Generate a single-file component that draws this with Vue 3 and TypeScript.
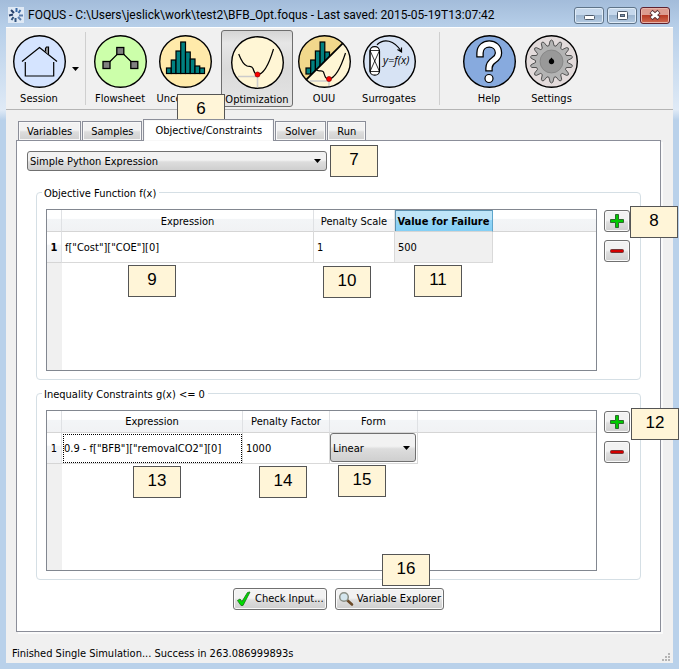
<script setup lang="ts">
import { ref } from 'vue'

interface Note { n: number; x: number; y: number }

const notes: Note[] = [
  { n: 6, x: 177, y: 94 },
  { n: 7, x: 330, y: 145 },
  { n: 8, x: 630, y: 206 },
  { n: 9, x: 128, y: 265 },
  { n: 10, x: 323, y: 266 },
  { n: 11, x: 414, y: 265 },
  { n: 12, x: 631, y: 408 },
  { n: 13, x: 133, y: 466 },
  { n: 14, x: 259, y: 466 },
  { n: 15, x: 338, y: 465 },
  { n: 16, x: 382, y: 554 },
]

const tabs = ['Variables', 'Samples', 'Objective/Constraints', 'Solver', 'Run']
const activeTab = ref('Objective/Constraints')
const solverType = ref('Simple Python Expression')
const form = ref('Linear')

const barTops = [33, 25, 16, 7, 17, 24, 31, 33]

function gearPath(teeth: number, outer: number, inner: number): string {
  const pts: string[] = []
  const step = (Math.PI * 2) / teeth
  const at = (r: number, a: number) => `${(26.5 + r * Math.sin(a)).toFixed(2)} ${(26.5 - r * Math.cos(a)).toFixed(2)}`
  for (let i = 0; i < teeth; i++) {
    const a = i * step
    pts.push(at(inner, a - step * 0.36), at(outer - 1, a - step * 0.16), at(outer, a), at(outer - 1, a + step * 0.16), at(inner, a + step * 0.36))
  }
  return `M${pts.join('L')}Z`
}
const gear = gearPath(14, 21.5, 16)
</script>

<template>
  <div class="window">
    <header class="titlebar">
      <svg class="app-icon" viewBox="0 0 16 16" aria-hidden="true">
        <rect width="16" height="16" fill="#dfe9f5" />
        <g stroke-width="2" fill="none">
          <path d="M8.500 1v4M12.500 3l-2 3" stroke="#3b6aa5" />
          <path d="M15 8.500h-4M13 13l-3-3" stroke="#5d7fae" />
          <path d="M7.500 15v-4M3.500 13l2-3" stroke="#33557f" />
          <path d="M1 8.500l4-1M3 3l3 3" stroke="#27406b" />
        </g>
      </svg>
      <h1>FOQUS - C:\Users\jeslick\work\test2\BFB_Opt.foqus - Last saved: 2015-05-19T13:07:42</h1>
      <div class="win-buttons">
        <button type="button" aria-label="Minimize"><svg viewBox="0 0 28 14"><rect x="9.500" y="7.500" width="10" height="4" rx="1" fill="#fff" stroke="#4d5a6b" /></svg></button>
        <button type="button" aria-label="Maximize"><svg viewBox="0 0 28 14"><rect x="9.500" y="3.500" width="10" height="8" rx="1" fill="#fff" stroke="#4d5a6b" /><rect x="12.500" y="6.500" width="4" height="2" fill="#7d93ae" stroke="#4d5a6b" /></svg></button>
        <button type="button" class="close" aria-label="Close"><svg viewBox="0 0 28 14"><path d="M10 3.500l8 7M18 3.500l-8 7" stroke="#5a3236" stroke-width="4.500" /><path d="M10.500 4l7 6M17.500 4l-7 6" stroke="#fff" stroke-width="2.800" /></svg></button>
      </div>
    </header>

    <div class="client">
      <nav class="toolbar" aria-label="Main">
        <button type="button" class="tool session">
          <svg viewBox="0 0 53 53"><circle cx="26.500" cy="26.500" r="25.800" fill="#d5e4ff" stroke="#000" stroke-width="1.400" /><g fill="none" stroke="#000" stroke-width="1.200"><path d="M9 26.500L26.500 12.500L44 26.500M12.300 27v14h28.400V27" /><path d="M32.500 16.500v-3l1-1.500h2v7.500" fill="#999" /></g></svg>
          <span>Session</span>
        </button>
        <button type="button" class="menu-arrow" aria-label="Session menu"><svg viewBox="0 0 7 4"><path d="M0 0h7L3.500 4z" /></svg></button>
        <i class="sep"></i>
        <button type="button" class="tool flowsheet">
          <svg viewBox="0 0 53 53"><circle cx="26.500" cy="26.500" r="25.800" fill="#ccffaa" stroke="#000" stroke-width="1.400" /><path d="M12.500 30L26.500 16L40.500 30" fill="none" stroke="#000" stroke-width="1.200" /><g fill="#808080" stroke="#000" stroke-width="1.300"><rect x="9" y="26.500" width="7" height="7" /><rect x="22.800" y="12.500" width="7" height="7" /><rect x="36.800" y="26.500" width="7" height="7" /></g></svg>
          <span>Flowsheet</span>
        </button>
        <button type="button" class="tool uncertainty">
          <svg viewBox="0 0 53 53"><circle cx="26.500" cy="26.500" r="25.800" fill="#ffeaaa" stroke="#000" stroke-width="1.400" /><g fill="#008080" stroke="#000" stroke-width="1.200"><rect v-for="(t, i) in barTops" :key="i" :x="7.5 + i * 4.75" :y="t" width="4.750" :height="38.5 - t" /></g></svg>
          <span>Uncertainty</span>
        </button>
        <button type="button" class="tool optimization pressed" aria-pressed="true">
          <svg viewBox="0 0 53 53"><circle cx="26.500" cy="26.500" r="25.800" fill="#fff6d5" stroke="#000" stroke-width="1.400" /><path d="M7 40.500h19.500v11" fill="none" stroke="#ccc" stroke-width="1.600" /><path d="M7.700 18C10 24 13 29 16 30C19 31 20.500 29 22 32.500C23 36 24 38.500 26.500 38.500C33 38.500 38 28 42.500 13" fill="none" stroke="#000" stroke-width="1.200" /><circle cx="26.500" cy="38.500" r="2.500" fill="#f00" stroke="#800" stroke-width=".7" /></svg>
          <span>Optimization</span>
        </button>
        <button type="button" class="tool ouu">
          <svg viewBox="0 0 53 53">
            <defs><clipPath id="half"><path d="M0 0H53L0 53Z" /></clipPath></defs>
            <circle cx="26.500" cy="26.500" r="25.800" fill="#fff6d5" /><circle cx="26.500" cy="26.500" r="25.800" fill="#f2d88c" clip-path="url(#half)" />
            <g fill="#008080" stroke="#000" stroke-width="1.200" clip-path="url(#half)"><rect v-for="(t, i) in barTops.slice(0, 5)" :key="i" :x="8 + i * 4.7" :y="t" width="4.700" :height="39 - t" /></g>
            <path d="M12 46h19v6" fill="none" stroke="#ccc" stroke-width="1.500" />
            <path d="M8.300 44.700L44.700 8.300" stroke="#000" stroke-width="1.800" />
            <path d="M18 34C20 38 24 34 25.500 37C27 41 27 44 31 44C38 43 43 32 47.500 18" fill="none" stroke="#000" stroke-width="1.200" />
            <circle cx="31" cy="44" r="2.500" fill="#f00" stroke="#800" stroke-width=".7" /><circle cx="26.500" cy="26.500" r="25.800" fill="none" stroke="#000" stroke-width="1.400" />
          </svg>
          <span>OUU</span>
        </button>
        <button type="button" class="tool surrogates">
          <svg viewBox="0 0 53 53"><circle cx="26.500" cy="26.500" r="25.800" fill="#d7e3f4" stroke="#000" stroke-width="1.400" /><g fill="none" stroke="#000"><rect x="7" y="11.700" width="9.500" height="28.500" rx="4.500" fill="#fff" stroke-width="1.200" /><path d="M7 15.500h9.500v21H7zM7 15.500l9.500 21M16.500 15.500l-9.500 21" stroke-width=".8" /><path d="M14 9.700C21 3 31 5 38 16M34.500 14.500L38.500 17V12.500" stroke-width="1.200" /></g><text x="20" y="29" class="formula">y=f(x)</text></svg>
          <span>Surrogates</span>
        </button>
        <i class="sep second"></i>
        <button type="button" class="tool help">
          <svg viewBox="0 0 53 53"><circle cx="26.500" cy="26.500" r="25.800" fill="#87aade" stroke="#000" stroke-width="1.400" /><g fill="none"><path d="M17 22.500V18C17 6 35.500 6 35.500 18C35.500 26 26 24 26 33V36.500" stroke="#000" stroke-width="7.500" /><path d="M17 21.300V18C17 6 35.500 6 35.500 18C35.500 26 26 24 26 33V35.300" stroke="#fff" stroke-width="5" /></g><circle cx="26" cy="43.500" r="4" fill="#fff" stroke="#000" stroke-width="1.200" /></svg>
          <span>Help</span>
        </button>
        <button type="button" class="tool settings">
          <svg viewBox="0 0 53 53"><circle cx="26.500" cy="26.500" r="25.800" fill="#e3dbdb" stroke="#000" stroke-width="1.400" /><path :d="gear" fill="#b3b3b3" stroke="#444" stroke-width=".9" stroke-linejoin="round" /><circle cx="26.500" cy="26.500" r="11.500" fill="#999" stroke="#777" stroke-width=".6" /><path d="M26.500 22.500l1.200 1.600a2.700 2.700 0 1 1-2.400 0z" /></svg>
          <span>Settings</span>
        </button>
      </nav>

      <main>
        <div class="tabs" role="tablist">
          <button v-for="t in tabs" :key="t" type="button" role="tab" :aria-selected="t === activeTab" :class="{ active: t === activeTab }" @click="activeTab = t">{{ t }}</button>
        </div>
        <div class="pane" role="tabpanel">
          <label class="combo wide">
            <select v-model="solverType" aria-label="Expression type"><option>Simple Python Expression</option></select>
            <svg viewBox="0 0 7 4"><path d="M0 0h7L3.500 4z" /></svg>
          </label>

          <section class="group" aria-labelledby="objective-title">
            <h2 id="objective-title">Objective Function f(x)</h2>
            <div class="sheet">
              <table>
                <colgroup><col class="c-row"><col class="c-expr1"><col class="c-scale"><col class="c-fail"><col></colgroup>
                <thead><tr><th></th><th>Expression</th><th>Penalty Scale</th><th class="picked">Value for Failure</th><th class="rest"></th></tr></thead>
                <tbody><tr><th class="strong">1</th><td>f["Cost"]["COE"][0]</td><td>1</td><td class="grey">500</td><td class="rest"></td></tr></tbody>
              </table>
            </div>
            <div class="side">
              <button type="button" aria-label="Add objective"><svg viewBox="0 0 16 16"><path d="M6.500 1.500h3v5h5v3h-5v5h-3v-5h-5v-3h5z" fill="#0c0" stroke="#2c6a2c" /></svg></button>
              <button type="button" aria-label="Remove objective"><svg viewBox="0 0 16 16"><rect x="1.500" y="6.500" width="13" height="3" rx="1" fill="#d40000" stroke="#743838" /></svg></button>
            </div>
          </section>

          <section class="group" aria-labelledby="constraint-title">
            <h2 id="constraint-title">Inequality Constraints g(x) &lt;= 0</h2>
            <div class="sheet">
              <table>
                <colgroup><col class="c-row"><col class="c-expr2"><col class="c-factor"><col class="c-form"><col></colgroup>
                <thead><tr><th></th><th>Expression</th><th>Penalty Factor</th><th>Form</th><th class="rest"></th></tr></thead>
                <tbody><tr><th>1</th><td class="focused">0.9 - f["BFB"]["removalCO2"][0]</td><td>1000</td><td class="holder">
                  <label class="combo">
                    <select v-model="form" aria-label="Form"><option>Linear</option></select>
                    <svg viewBox="0 0 7 4"><path d="M0 0h7L3.500 4z" /></svg>
                  </label></td><td class="rest"></td></tr></tbody>
              </table>
            </div>
            <div class="side">
              <button type="button" aria-label="Add constraint"><svg viewBox="0 0 16 16"><path d="M6.500 1.500h3v5h5v3h-5v5h-3v-5h-5v-3h5z" fill="#0c0" stroke="#2c6a2c" /></svg></button>
              <button type="button" aria-label="Remove constraint"><svg viewBox="0 0 16 16"><rect x="1.500" y="6.500" width="13" height="3" rx="1" fill="#d40000" stroke="#743838" /></svg></button>
            </div>
          </section>

          <div class="actions">
            <button type="button"><svg viewBox="0 0 16 16"><path d="M1.500 9.500l2.500-1.500 2 2.500L11.500 1.500l2.500-.5L7 14.500H5z" fill="#0d0" stroke="#1d7a1d" stroke-width=".9" /></svg>Check Input...</button>
            <button type="button"><svg viewBox="0 0 16 16"><path d="M9 9l5 4.500" stroke="#6b4a28" stroke-width="2.600" stroke-linecap="round" /><circle cx="6" cy="6" r="4.300" fill="#d4e6ee" stroke="#8a8f86" stroke-width="1.500" /></svg>Variable Explorer</button>
          </div>
        </div>
      </main>

      <footer>
        <span>Finished Single Simulation... Success in 263.086999893s</span>
        <svg class="grip" viewBox="0 0 9 9"><path d="M6 0h2v2H6zM3 3h2v2H3zM6 3h2v2H6zM0 6h2v2H0zM3 6h2v2H3zM6 6h2v2H6z" fill="#b4b4b4" /></svg>
      </footer>
    </div>

    <div v-for="note in notes" :key="note.n" class="note" :style="{ left: note.x + 'px', top: note.y + 'px' }">{{ note.n }}</div>
  </div>
</template>

<style>
body { margin: 0; }
</style>

<style scoped>
* { box-sizing: border-box; }
.window {
  position: relative;
  min-height: 100vh;
  padding: 0 6px 6px;
  display: flex;
  flex-direction: column;
  background: linear-gradient(#a3bcda 0, #b7cfe9 27px, #dfeaf6 110px, #b9d1ea 120px);
  font: 11px/16px "DejaVu Sans Condensed", "Noto Sans", sans-serif;
  color: #000;
}
button, select { font: inherit; color: inherit; margin: 0; }
svg { display: block; flex: none; }
.titlebar { height: 27px; display: flex; align-items: center; padding: 3px 3px 0 2px; }
.app-icon { width: 16px; height: 16px; }
h1 { margin: 0 auto 0 4px; font: 12px/16px Roboto, sans-serif; white-space: nowrap; }
.win-buttons { display: flex; gap: 3px; }
.win-buttons button { width: 30px; height: 17px; padding: 0; border: 1px solid #5f7489; border-radius: 3px; background: linear-gradient(#c6d8ec 45%, #9db6d0 50%, #b4cae2); box-shadow: inset 0 0 0 1px #dfebf7; }
.win-buttons svg { width: 28px; height: 14px; }
.win-buttons .close { border-color: #5e2130; background: linear-gradient(#dc9b90 45%, #b83a26 50%, #cf6a50); box-shadow: inset 0 0 0 1px #e8b3a8; }
.client { flex: 1; display: flex; flex-direction: column; background: #f0f0f0; }

.toolbar { height: 83px; padding: 2px 0 0 2px; display: flex; align-items: flex-start; border-top: 1px solid #fff; border-bottom: 1px solid #b4b4b4; }
.tool { height: 77px; padding: 4px 0 0; border: 1px solid transparent; border-radius: 3px; background: none; display: flex; flex-direction: column; align-items: center; gap: 3px; }
.tool svg { width: 53px; height: 53px; }
.session { width: 62px; }
.flowsheet { width: 60px; }
.uncertainty { width: 71px; }
.optimization { width: 72px; }
.ouu { width: 62px; }
.surrogates { width: 68px; }
.help { width: 60px; }
.settings { width: 65px; }
.pressed { padding-top: 5px; border-color: #6e6e6e; background: linear-gradient(#d4d4d4, #e6e6e6 12px, #dadada 50%, #e4e4e4); }
.formula { font: italic 11px "Open Sans", sans-serif; }
.menu-arrow { width: 15px; height: 77px; padding: 0 0 0 2px; border: 0; background: none; }
.menu-arrow svg, .combo svg { width: 7px; height: 4px; }
.sep { width: 1px; height: 73px; margin: 2px 4px 0 0; background: #cfcfcf; }
.sep.second { margin: 2px 19px 0 16px; }

main { flex: 1; display: flex; flex-direction: column; padding: 9px 12px 0 10px; }
.tabs { display: flex; align-items: flex-end; padding-left: 2px; gap: 1px; }
.tabs button { height: 19px; padding: 1px 8px 0; border: 1px solid #8b8e99; border-bottom: 0; background: linear-gradient(#f2f2f2 45%, #dddddd 55%, #d0d0d0); line-height: 18px; box-shadow: inset 0 0 0 1px #f8f8f8; }
.tabs button.active { height: 22px; margin-bottom: -1px; padding: 0 11px; background: #fff; z-index: 1; }
.tabs .active ~ button { padding: 1px 9px 0; }
.pane { flex: 1; display: flex; flex-direction: column; padding: 10px 19px 21px 10px; border: 1px solid #8b8e99; background: #fff; box-shadow: 2px 2px 0 #fafafa; }
.combo { position: relative; display: flex; }
.combo.wide { width: 300px; height: 20px; margin-bottom: 21px; }
.combo select { appearance: none; width: 100%; height: 100%; padding: 2px 2px 0; border: 1px solid #707070; border-radius: 3px; background: linear-gradient(#f2f2f2 45%, #dddddd 55%, #cfcfcf); }
.combo svg { position: absolute; right: 6px; top: calc(50% - 2px); pointer-events: none; }

.group { flex: 1; display: flex; position: relative; margin-left: 9px; padding: 16px 10px 8px 9px; border: 1px solid #d5dfe5; border-radius: 4px; gap: 7px; }
.group + .group { margin-top: 13px; }
h2 { position: absolute; left: 5px; top: -7px; margin: 0; padding: 0 3px 0 2px; background: #fff; font: inherit; }
.sheet { flex: 1; border: 1px solid #828790; background: linear-gradient(90deg, #f0f0f0 15px, #fff 15px); }
table { width: 100%; table-layout: fixed; border-spacing: 0; }
th { height: 22px; padding: 2px 0 0; font-weight: 400; white-space: nowrap; border-right: 1px solid #dfe1e4; border-bottom: 1px solid #d5d5d5; background: linear-gradient(#fff 40%, #f3f5f7 45%, #f1f2f4); }
th.strong, th.picked { font-weight: 700; }
th.picked { border-right-color: #5fa6cc; box-shadow: inset 1px 1px 0 #5b8fad; background: linear-gradient(#bfe5f8 45%, #92d4f6 50%, #84cff5); }
th.rest { border-right: 0; }
td { height: 31px; padding: 2px 3px 0; white-space: nowrap; border-right: 1px solid #d9d9d9; border-bottom: 1px solid #d9d9d9; }
td.rest { border: 0; }
td.grey { background: #f0f0f0; }
td.focused { padding: 2px 2px 0; outline: 1px dotted #000; outline-offset: -2px; }
td.holder { padding: 0; }
.holder .combo { height: 29px; margin: 0 1px 0 0; }
.c-row { width: 15px; }
.c-expr1 { width: 252px; }
.c-scale { width: 81px; }
.c-fail { width: 98px; }
.c-expr2 { width: 181px; }
.c-factor { width: 87px; }
.c-form { width: 88px; }
.side { display: flex; flex-direction: column; gap: 8px; padding-top: 1px; }
.side button, .actions button { border: 1px solid #707070; border-radius: 3px; background: linear-gradient(#f2f2f2 45%, #dedede 55%, #cfcfcf); box-shadow: inset 0 0 0 1px #fafafa; }
.side button { width: 26px; height: 22px; padding: 0; display: grid; place-items: center; }
.side svg, .actions svg { width: 16px; height: 16px; }
.actions { display: flex; gap: 8px; justify-content: center; margin: 8px 0 0 9px; }
.actions button { height: 22px; padding: 0 2px; display: flex; align-items: center; gap: 3px; white-space: nowrap; }
footer { height: 31px; padding: 14px 2px 0 6px; display: flex; justify-content: space-between; white-space: nowrap; }
.grip { width: 9px; height: 9px; margin-top: 7px; }
.note { position: absolute; width: 48px; height: 32px; border: 1px solid #555; background: #fff5d8; font: 17px/28px "Liberation Sans", sans-serif; text-align: center; }
</style>
